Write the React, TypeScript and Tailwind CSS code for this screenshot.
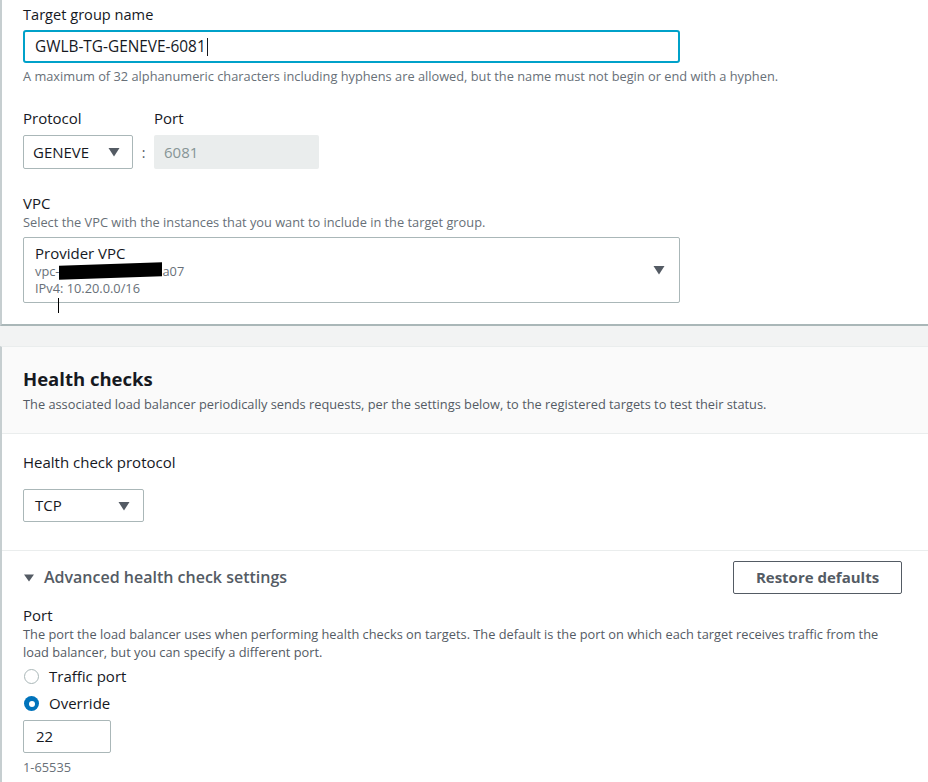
import React from 'react';

const font = { fontFamily: '"Open Sans", "Noto Sans", sans-serif' };

function Caret({ className = '' }: { className?: string }) {
  return (
    <svg width="12" height="10" viewBox="0 0 12 10" className={className}>
      <path d="M0.5 1 L11.5 1 L6 9.5 Z" fill="#545b64" />
    </svg>
  );
}

function Radio({ checked, label }: { checked?: boolean; label: string }) {
  return (
    <div className="flex items-center h-[27px]">
      {checked ? (
        <span className="w-[15px] h-[15px] rounded-full bg-[#0073bb] flex items-center justify-center ml-[1px]">
          <span className="w-[6px] h-[6px] rounded-full bg-white" />
        </span>
      ) : (
        <span className="w-[15px] h-[15px] rounded-full border border-[#aab7b8] bg-white ml-[1px]" />
      )}
      <span className="ml-[10px] text-[15px] text-[#16191f]">{label}</span>
    </div>
  );
}

export default function App() {
  return (
    <div style={font} className="w-[928px] h-[782px] overflow-hidden bg-[#f2f3f3] text-[#16191f]">
      {/* target group panel */}
      <div className="bg-white border-l-2 border-[#c6ced0] border-b-2 border-b-[#aab7b8] h-[326px] pl-[21px] pt-[4px]">
        <div className="text-[14.6px] leading-[20px]">Target group name</div>
        <div className="mt-[6px] w-[657px] h-[33px] border-2 border-[#00a1c9] rounded-[3px] flex items-center pl-[10px] text-[15.4px]">
          GWLB-TG-GENEVE-6081<span className="inline-block w-[1px] h-[18px] bg-[#16191f] ml-[1px]" />
        </div>
        <div className="mt-[5px] text-[12.8px] leading-[16px] text-[#687078]">
          A maximum of 32 alphanumeric characters including hyphens are allowed, but the name must not begin or end with a hyphen.
        </div>

        <div className="mt-[24px] flex items-end">
          <div>
            <div className="text-[15px] leading-[20px]">Protocol</div>
            <div className="mt-[7px] w-[110px] h-[34px] border border-[#aab7b8] rounded-[2px] flex items-center justify-between pl-[9px] pr-[12px] text-[15px]">
              GENEVE
              <Caret />
            </div>
          </div>
          <div className="w-[21px] h-[34px] flex items-center justify-center text-[14px] text-[#545b64]">:</div>
          <div>
            <div className="text-[15px] leading-[20px]">Port</div>
            <div className="mt-[7px] w-[165px] h-[34px] bg-[#eaeded] rounded-[2px] flex items-center pl-[10px] text-[15px] text-[#879596]">
              6081
            </div>
          </div>
        </div>

        <div className="mt-[24px] text-[15px] leading-[20px]">VPC</div>
        <div className="text-[12.8px] leading-[18px] text-[#687078]">
          Select the VPC with the instances that you want to include in the target group.
        </div>
        <div className="mt-[6px] w-[657px] h-[66px] border border-[#aab7b8] rounded-[2px] flex items-center justify-between pl-[11px] pr-[14px]">
          <div className="flex flex-col">
            <span className="text-[15px] leading-[18px] text-[#16191f]">Provider VPC</span>
            <span className="text-[12.8px] leading-[18px] text-[#687078] flex items-center">
              vpc-<span className="inline-block w-[103px] h-[14px] bg-black -skew-y-2" />a07
            </span>
            <span className="text-[12.8px] leading-[17px] text-[#687078]">IPv4: 10.20.0.0/16</span>
          </div>
          <Caret />
        </div>
        <div className="ml-[35px] w-[1px] h-[15px] bg-black -mt-[5px]" />
      </div>

      {/* health checks panel */}
      <div className="mt-[20px] bg-white border-l-2 border-[#c6ced0] border-t border-t-[#eaeded] h-[450px]">
        <div className="bg-[#fafafa] border-b border-[#eaeded] h-[87px] pl-[21px] pt-[20px]">
          <div className="text-[18.5px] leading-[24px] font-bold">Health checks</div>
          <div className="mt-[5px] text-[12.8px] leading-[16px] text-[#545b64]">
            The associated load balancer periodically sends requests, per the settings below, to the registered targets to test their status.
          </div>
        </div>

        <div className="pl-[21px] pt-[18px] h-[117px] border-b border-[#eaeded]">
          <div className="text-[15px] leading-[20px]">Health check protocol</div>
          <div className="mt-[17px] w-[121px] h-[33px] border border-[#aab7b8] rounded-[2px] flex items-center justify-between pl-[11px] pr-[13px] text-[15px]">
            TCP
            <Caret />
          </div>
        </div>

        <div className="pl-[21px] pr-[26px]">
          <div className="flex items-center justify-between mt-[10px]">
            <div className="flex items-center">
              <svg width="10" height="8" viewBox="0 0 10 8" className="ml-[1px]">
                <path d="M0 0.5 L10 0.5 L5 7.5 Z" fill="#545b64" />
              </svg>
              <span className="ml-[10px] text-[16px] leading-[22px] font-semibold text-[#545b64] -mt-[2px]">Advanced health check settings</span>
            </div>
            <div className="w-[169px] h-[33px] border border-[#545b64] rounded-[2px] flex items-center justify-center text-[15px] font-bold text-[#545b64]">
              Restore defaults
            </div>
          </div>

          <div className="mt-[11px] text-[15px] leading-[20px]">Port</div>
          <div className="text-[12.8px] leading-[18px] text-[#545b64] w-[878px]">
            The port the load balancer uses when performing health checks on targets. The default is the port on which each target receives traffic from the load balancer, but you can specify a different port.
          </div>
          <div className="mt-[2px]">
            <Radio label="Traffic port" />
            <Radio checked label="Override" />
          </div>
          <div className="mt-[3px] w-[88px] h-[33px] border border-[#aab7b8] rounded-[2px] flex items-center pl-[12px] text-[15px]">
            22
          </div>
          <div className="mt-[6px] text-[12.8px] leading-[16px] text-[#687078]">1-65535</div>
        </div>
      </div>
    </div>
  );
}
